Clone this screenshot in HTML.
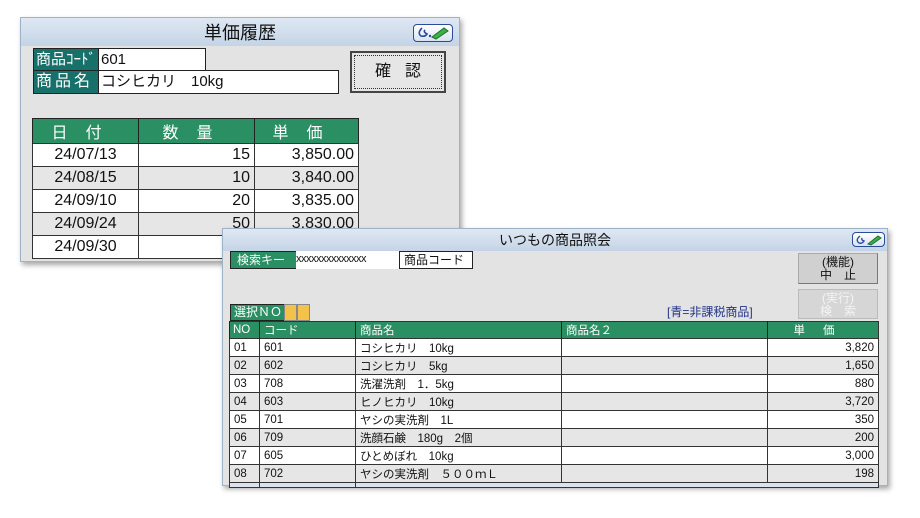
<!DOCTYPE html>
<html><head><meta charset="utf-8"><style>
*{box-sizing:border-box;margin:0;padding:0}
body{width:920px;height:518px;background:#fff;position:relative;overflow:hidden;font-family:"Liberation Sans","Noto Sans CJK JP",sans-serif;color:#111}
.abs{position:absolute;white-space:nowrap}
.win{position:absolute;background:#e3e3e3;border:1px solid #9fb2c8;box-shadow:2px 3px 5px rgba(0,0,0,.35)}
.tb{position:absolute;left:0;right:0;top:0;background:linear-gradient(#dfe8f3,#c4d4e6);text-align:center}
.lab{position:absolute;background:#17706a;color:#fff;border:1px solid #222;white-space:nowrap;overflow:hidden}
.inp{position:absolute;background:#fff;border:1px solid #222;white-space:nowrap;overflow:hidden}
.icon{position:absolute;border:1.5px solid #2a4a9a;border-radius:4px;background:linear-gradient(#fff,#d8e2f2)}
table{border-collapse:collapse;position:absolute}
td{border:1px solid #333;padding:0 4px;white-space:nowrap}
.g th{background:#2a8f63;color:#fff;font-weight:normal;border-left:1px solid #222;white-space:nowrap}
</style></head><body>

<div class="win" style="left:20px;top:17px;width:440px;height:245px;">
 <div class="tb" style="height:28px;font-size:18px;line-height:30px;">単価履歴</div>
 <div class="icon" style="left:392px;top:6px;width:40px;height:18px;"><svg width="37" height="15"><path d="M8 3 Q3 8 7 11 Q11 12 13 9 Q9 7 11 5" stroke="#2a4aa0" fill="none" stroke-width="1.6"/><circle cx="16" cy="11" r="1.2" fill="#2a4aa0"/><path d="M18 12 L30 3 L34 6 L22 14 Z" fill="#3bb04a" stroke="#1d6e2a"/></svg></div>
 <div class="lab" style="left:12px;top:30px;width:66px;height:23px;font-size:15px;line-height:21px;padding-left:2px">商品ｺｰﾄﾞ</div>
 <div class="inp" style="left:77px;top:30px;width:108px;height:23px;font-size:15px;line-height:21px;padding-left:2px">601</div>
 <div class="lab" style="left:12px;top:52px;width:66px;height:24px;font-size:16px;line-height:22px;padding-left:2px;letter-spacing:3px">商品名</div>
 <div class="inp" style="left:77px;top:52px;width:241px;height:24px;font-size:15px;line-height:22px;padding-left:2px">コシヒカリ　10kg</div>
 <div class="abs" style="left:329px;top:33px;width:96px;height:42px;border:2px solid #444;background:#e6e6e6;outline:1px dotted #333;outline-offset:-5px;text-align:center;font-size:16px;line-height:38px;letter-spacing:14px;padding-left:14px">確認</div>
 <table class="g" style="left:11px;top:100px;width:327px;font-size:16px;border:1px solid #222">
  <tr style="height:22px"><th style="width:106px;letter-spacing:18px">日付</th><th style="width:116px;letter-spacing:18px">数量</th><th style="letter-spacing:18px">単価</th></tr>
  <tr style="height:23px;background:#fff"><td style="text-align:center">24/07/13</td><td style="text-align:right">15</td><td style="text-align:right">3,850.00</td></tr>
  <tr style="height:23px;background:#e6e6e6"><td style="text-align:center">24/08/15</td><td style="text-align:right">10</td><td style="text-align:right">3,840.00</td></tr>
  <tr style="height:23px;background:#fff"><td style="text-align:center">24/09/10</td><td style="text-align:right">20</td><td style="text-align:right">3,835.00</td></tr>
  <tr style="height:23px;background:#e6e6e6"><td style="text-align:center">24/09/24</td><td style="text-align:right">50</td><td style="text-align:right">3,830.00</td></tr>
  <tr style="height:23px;background:#fff"><td style="text-align:center">24/09/30</td><td></td><td></td></tr>
 </table>
</div>

<div class="win" style="left:222px;top:228px;width:666px;height:258px;">
 <div class="tb" style="height:22px;font-size:14px;line-height:23px;">いつもの商品照会</div>
 <div class="icon" style="left:629px;top:3px;width:33px;height:15px;"><svg width="31" height="12"><path d="M7 2 Q2 6 6 9 Q9 10 11 7 Q8 6 9 4" stroke="#2a4aa0" fill="none" stroke-width="1.4"/><path d="M15 10 L25 2 L28 4 L18 11 Z" fill="#3bb04a" stroke="#1d6e2a"/></svg></div>
 <div class="lab" style="left:7px;top:22px;width:67px;height:18px;font-size:12px;line-height:16px;padding-left:6px;background:#2a8f63">検索キー</div>
 <div class="inp" style="left:73px;top:22px;width:103px;height:18px;font-size:11px;line-height:16px;border:none;letter-spacing:-.5px">xxxxxxxxxxxxxx</div>
 <div class="inp" style="left:176px;top:22px;width:74px;height:18px;font-size:12px;line-height:16px;padding-left:4px">商品コード</div>
 <div class="abs" style="left:575px;top:24px;width:80px;height:31px;background:#d0d0d0;border:1px solid #aaa;border-right-color:#777;border-bottom-color:#777;text-align:center;font-size:12px;line-height:13px;padding-top:2px">(機能)<br>中　止</div>
 <div class="abs" style="left:575px;top:60px;width:80px;height:30px;background:#d6d6d6;border:1px solid #bbb;text-align:center;font-size:12px;line-height:13px;padding-top:2px;color:#f4f4f4">(実行)<br>検　索</div>
 <div class="lab" style="left:7px;top:75px;width:55px;height:17px;font-size:12px;line-height:15px;padding-left:3px;background:#2a8f63">選択ＮＯ</div>
 <div class="abs" style="left:61px;top:75px;width:13px;height:17px;background:#f2c24a;border:1px solid #888"></div>
 <div class="abs" style="left:74px;top:75px;width:13px;height:17px;background:#f2c24a;border:1px solid #888"></div>
 <div class="abs" style="left:444px;top:74px;font-size:12px;color:#223388">[青=非課税商品]</div>
 <table style="left:6px;top:92px;width:650px;font-size:11.5px;border:1px solid #333">
  <tr class="g" style="height:17px"><th style="width:30px;text-align:left;padding-left:3px">NO</th><th style="width:96px;text-align:left;padding-left:4px">コード</th><th style="width:206px;text-align:left;padding-left:4px">商品名</th><th style="width:206px;text-align:left;padding-left:4px">商品名２</th><th style="letter-spacing:18px">単価</th></tr>
  <tr style="height:18px;background:#fff"><td>01</td><td>601</td><td>コシヒカリ　10kg</td><td></td><td style="text-align:right">3,820</td></tr>
  <tr style="height:18px;background:#e6e6e6"><td>02</td><td>602</td><td>コシヒカリ　5kg</td><td></td><td style="text-align:right">1,650</td></tr>
  <tr style="height:18px;background:#fff"><td>03</td><td>708</td><td>洗濯洗剤　1．5kg</td><td></td><td style="text-align:right">880</td></tr>
  <tr style="height:18px;background:#e6e6e6"><td>04</td><td>603</td><td>ヒノヒカリ　10kg</td><td></td><td style="text-align:right">3,720</td></tr>
  <tr style="height:18px;background:#fff"><td>05</td><td>701</td><td>ヤシの実洗剤　1L</td><td></td><td style="text-align:right">350</td></tr>
  <tr style="height:18px;background:#e6e6e6"><td>06</td><td>709</td><td>洗顔石鹸　180g　2個</td><td></td><td style="text-align:right">200</td></tr>
  <tr style="height:18px;background:#fff"><td>07</td><td>605</td><td>ひとめぼれ　10kg</td><td></td><td style="text-align:right">3,000</td></tr>
  <tr style="height:18px;background:#e6e6e6"><td>08</td><td>702</td><td>ヤシの実洗剤　５００ｍＬ</td><td></td><td style="text-align:right">198</td></tr>
  <tr style="height:5px;background:#dde3ee"><td></td><td></td><td style="border:none"></td><td style="border:none"></td><td style="border:none"></td></tr>
 </table>
</div>
</body></html>
